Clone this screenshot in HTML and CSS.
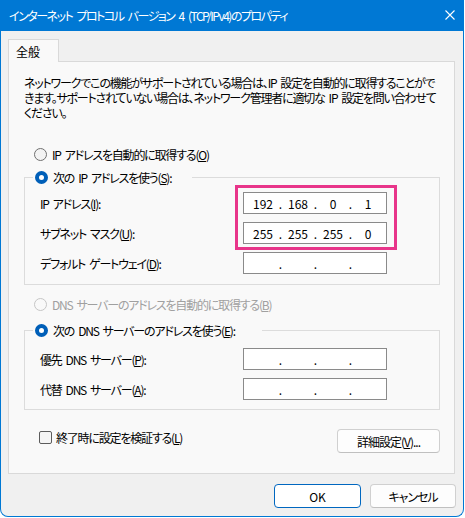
FILE: index.html
```html
<!DOCTYPE html>
<html lang="ja">
<head>
<meta charset="utf-8">
<title>インターネット プロトコル バージョン 4 (TCP/IPv4)のプロパティ</title>
<link rel="stylesheet" href="styles.css">
</head>
<body>
<div class="window">
  <div class="titlebar">
    <span class="title">インターネット プロトコル バージョン 4 (TCP/IPv4)のプロパティ</span>
    <svg class="close" width="10" height="10" viewBox="0 0 10 10"><path d="M0.5 0.5 L9.5 9.5 M9.5 0.5 L0.5 9.5" stroke="#fff" stroke-width="1.1" fill="none"/></svg>
  </div>
  <div class="body">
    <div class="tabs"><div class="tab">全般</div></div>
    <div class="panel">
      <p class="desc">ネットワークでこの機能がサポートされている場合は、IP 設定を自動的に取得することがで<br>きます。サポートされていない場合は、ネットワーク管理者に適切な IP 設定を問い合わせて<br>ください。</p>

      <div class="radio-row"><span class="radio"></span><span>IP アドレスを自動的に取得する(<u>O</u>)</span></div>

      <fieldset class="group group-ip">
        <legend class="legend legend-ip"><span class="radio checked"></span><span>次の IP アドレスを使う(<u>S</u>):</span></legend>
        <div class="fields">
          <label class="label">IP アドレス(<u>I</u>):</label>
          <div class="ipbox">
            <span class="seg">192</span><span class="dot">.</span><span class="seg">168</span><span class="dot">.</span><span class="seg">0</span><span class="dot">.</span><span class="seg">1</span>
            <div class="highlight"></div>
          </div>
          <label class="label">サブネット マスク(<u>U</u>):</label>
          <div class="ipbox">
            <span class="seg">255</span><span class="dot">.</span><span class="seg">255</span><span class="dot">.</span><span class="seg">255</span><span class="dot">.</span><span class="seg">0</span>
          </div>
          <label class="label">デフォルト ゲートウェイ(<u>D</u>):</label>
          <div class="ipbox">
            <span class="seg"></span><span class="dot">.</span><span class="seg"></span><span class="dot">.</span><span class="seg"></span><span class="dot">.</span><span class="seg"></span>
          </div>
        </div>
      </fieldset>

      <div class="radio-row radio-row-dns disabled"><span class="radio"></span><span>DNS サーバーのアドレスを自動的に取得する(<u>B</u>)</span></div>

      <fieldset class="group group-dns">
        <legend class="legend legend-dns"><span class="radio checked"></span><span>次の DNS サーバーのアドレスを使う(<u>E</u>):</span></legend>
        <div class="fields">
          <label class="label">優先 DNS サーバー(<u>P</u>):</label>
          <div class="ipbox">
            <span class="seg"></span><span class="dot">.</span><span class="seg"></span><span class="dot">.</span><span class="seg"></span><span class="dot">.</span><span class="seg"></span>
          </div>
          <label class="label">代替 DNS サーバー(<u>A</u>):</label>
          <div class="ipbox">
            <span class="seg"></span><span class="dot">.</span><span class="seg"></span><span class="dot">.</span><span class="seg"></span><span class="dot">.</span><span class="seg"></span>
          </div>
        </div>
      </fieldset>

      <div class="bottom-row">
        <div class="check-row"><span class="checkbox"></span><span>終了時に設定を検証する(<u>L</u>)</span></div>
        <button class="btn btn-adv">詳細設定(<u>V</u>)...</button>
      </div>
    </div>
    <div class="footer">
      <button class="btn btn-ok">OK</button>
      <button class="btn btn-cancel">キャンセル</button>
    </div>
  </div>
</div>
</body>
</html>
```
FILE: styles.css
```css
* { box-sizing: border-box; }
html, body { margin: 0; padding: 0; background: #ffffff; }
body {
  font-family: "Noto Sans CJK JP", "Noto Sans", sans-serif;
  font-size: 12px;
  line-height: 15px;
  color: #000;
  font-feature-settings: "palt" 1;
  letter-spacing: -1.2px;
  word-spacing: 2.5px;
}
.window {
  width: 464px;
  height: 517px;
  background: #f0f0f0;
  border: 1px solid #0078d4;
  border-top: none;
  border-radius: 0 0 8px 8px;
  overflow: hidden;
  display: flex;
  flex-direction: column;
}
.titlebar {
  height: 31px;
  background: #0078d4;
  color: #fff;
  display: flex;
  align-items: center;
  justify-content: space-between;
  padding: 0 9px 1px 9px;
  margin: 0 -1px;
}
.title { font-size: 12px; letter-spacing: -1.5px; word-spacing: 3px; }
.close { margin-right: 0; margin-top: 0; }
.body {
  padding: 8px 7px 0 7px;
  display: flex;
  flex-direction: column;
}
.tabs { display: flex; height: 22px; }
.tab {
  width: 51px;
  height: 23px;
  background: #f9f9f9;
  border: 1px solid #d9d9d9;
  border-bottom: none;
  padding: 4px 0 0 7px;
  position: relative;
  z-index: 1;
  letter-spacing: 0;
}
.panel {
  height: 413px;
  margin-right: 1px;
  background: #f9f9f9;
  border: 1px solid #d9d9d9;
  padding: 13px 14px 0 15px;
  display: flex;
  flex-direction: column;
}
.desc { margin: 0; white-space: nowrap; }
.radio-row {
  display: flex;
  align-items: center;
  height: 16px;
  margin: 26px 0 0 10px;
  gap: 5px;
}
.radio-row-dns { margin-top: 11px; }
.disabled { color: #a0a0a0; }
.radio {
  width: 13px;
  height: 13px;
  border-radius: 50%;
  border: 1px solid #707070;
  background: #f3f3f3;
  flex: none;
}
.disabled .radio { border-color: #c6c6c6; background: #f9f9f9; }
.radio.checked {
  border: 4px solid #005fb8;
  background: #fff;
}
.group {
  margin: 7px 0 0 0;
  border: 1px solid #dcdcdc;
  border-radius: 0;
  min-width: 0;
}
.group-ip { padding: 7px 52px 10px 8px; }
.group-dns { margin-top: 10px; padding: 10px 52px 9px 8px; }
.legend {
  display: flex;
  align-items: center;
  gap: 5px;
  height: 16px;
  padding: 0 0 0 2px;
  margin-left: 0;
}
.legend-ip { width: 159px; }
.legend-dns { width: 229px; }
.fields {
  display: grid;
  grid-template-columns: 1fr 144px;
  row-gap: 8px;
  align-items: center;
  margin-left: 7px;
}
.ipbox {
  height: 22px;
  background: #fff;
  border: 1px solid #8a8a8a;
  display: flex;
  align-items: center;
  padding-left: 4px;
  position: relative;
  letter-spacing: 0;
}
.seg { width: 30px; text-align: center; }
.dot { width: 5px; text-align: center; }
.highlight {
  position: absolute;
  left: -9px;
  top: -8px;
  width: 162px;
  height: 65px;
  border: 3px solid #e8358a;
  pointer-events: none;
}
.bottom-row {
  display: flex;
  justify-content: space-between;
  align-items: flex-start;
  margin-top: 19px;
  padding-right: 0;
}
.check-row {
  display: flex;
  align-items: center;
  gap: 4px;
  height: 16px;
  margin: 0 0 0 15px;
}
.checkbox {
  width: 13px;
  height: 13px;
  border: 1px solid #5c5c5c;
  border-radius: 2px;
  background: #f5f5f5;
}
.btn {
  font: inherit;
  letter-spacing: -1px;
  color: #000;
  background: #fdfdfd;
  border: 1px solid #d0d0d0;
  border-bottom-color: #c0c0c0;
  border-radius: 4px;
  height: 24px;
  padding: 0;
}
.btn-adv { width: 103px; }
.footer {
  display: flex;
  justify-content: flex-end;
  gap: 9px;
  margin-top: 10px;
  padding-right: 0;
}
.btn-ok { width: 87px; border: 1px solid #0067c0; background: #fff; letter-spacing: 0; }
.btn-cancel { width: 86px; }
```
